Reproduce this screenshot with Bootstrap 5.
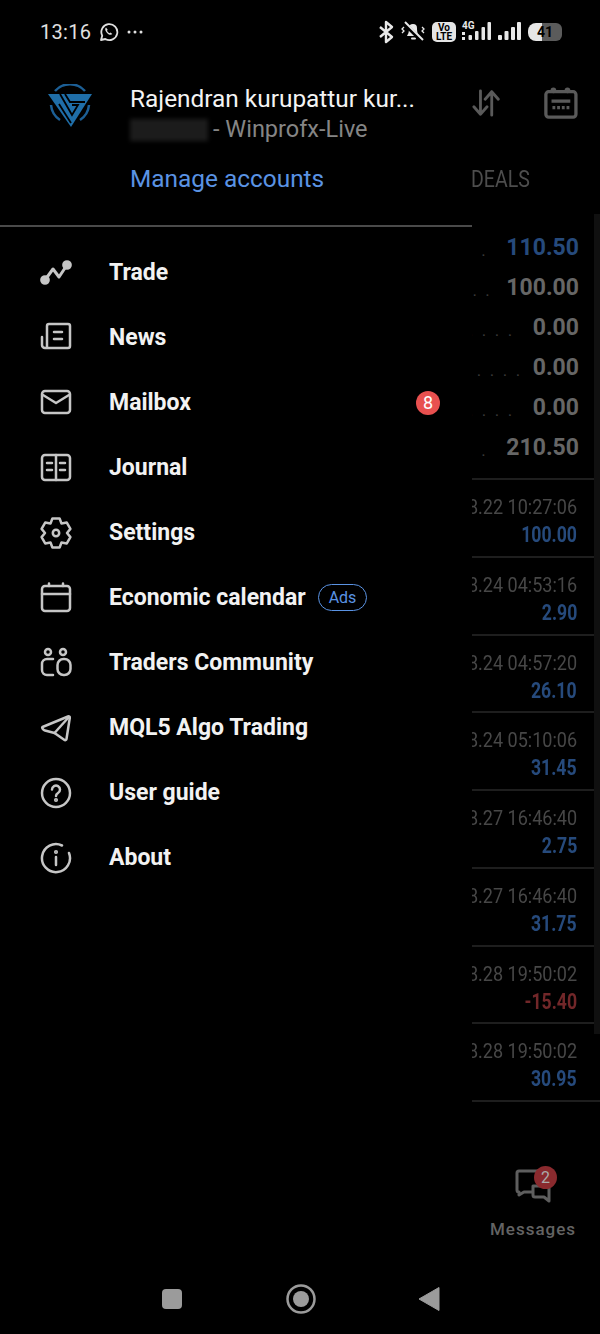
<!DOCTYPE html>
<html lang="en">
<head>
  <meta charset="UTF-8" />
  <title>Menu</title>
  <meta name="viewport" content="width=device-width, initial-scale=1" />
  <link href="https://cdn.jsdelivr.net/npm/bootstrap@5.3.0/dist/css/bootstrap.min.css" rel="stylesheet" />
  <style>
    html, body { height: 1334px; overflow: hidden; background: #000; }
    body { font-family: Roboto, sans-serif; color: #fff; }
    .screen { width: 600px; height: 1334px; }

    .status-bar { height: 63px; padding: 0 38px 0 40px; color: #e0e0e0; }
    .status-time { font-size: 20px; letter-spacing: .3px; }
    .status-icons { gap: 7px; }
    .volte { width: 24px; height: 20px; background: #e4e4e4; border-radius: 5px; color: #000; font-size: 10px; font-weight: 700; line-height: 9.5px; text-align: center; padding-top: 1px; }
    .net-wrap { width: 29px; height: 20px; margin-left: -1px; }
    .net-label { font-size: 10px; font-weight: 700; line-height: 9px; top: -1px; left: 0; color: #e8e8e8; }
    .battery { width: 34px; height: 18px; border-radius: 8px 6px 6px 8px; background: linear-gradient(90deg, #e6e6e6 42%, #5b5b5b 42%); color: #000; font-size: 14px; font-weight: 700; line-height: 18px; text-align: center; }

    .main-area { height: 1201px; }
    .drawer { width: 472px; flex: 0 0 472px; }
    .account { padding: 21px 0 0 0; height: 164px; border-bottom: 2px solid #4a4a4a; margin-bottom: 14px; }
    .logo-col { width: 130px; flex: 0 0 130px; padding: 0 0 0 47px; }
    .account-name { font-size: 24.4px; line-height: 30px; width: 300px; white-space: nowrap; color: #f4f4f4; }
    .account-server { font-size: 23.5px; line-height: 31px; color: #858585; }
    .blurred { width: 78px; height: 22px; background: #1c1c1c; filter: blur(2px); margin-right: 5px; }
    .manage-link { font-size: 24.4px; line-height: 30px; margin-top: 19px; color: #5a93e4; text-decoration: none; }

    .menu-row { height: 65px; padding-left: 40px; padding-right: 32px; color: #f2f2f2; text-decoration: none; font-size: 23px; font-weight: 700; }
    .menu-icon { width: 32px; height: 32px; margin-right: 37px; margin-bottom: 2px; flex: 0 0 32px; stroke: #c6c6c6; stroke-width: 2.5; fill: none; stroke-linecap: round; stroke-linejoin: round; }
    .count-dot { width: 24px; height: 24px; border-radius: 50%; background: #e8504f; color: #fff; font-size: 18px; line-height: 24px; text-align: center; font-weight: 400; margin-bottom: 2px; }
    .ads-pill { border: 1.5px solid #5a93e4; color: #5a93e4; border-radius: 15px; font-size: 16px; font-weight: 400; line-height: 25px; padding: 0 10px; margin-left: 12px; margin-bottom: 2px; }

    .back-panel { width: 128px; flex: 0 0 128px; overflow: hidden; color: #666; }
    .tool-row { height: 80px; padding-right: 22px; gap: 44px; }
    .tab-title { height: 71px; font-size: 23px; color: #4d4d4d; line-height: 74px; margin-bottom: 14px; margin-left: -1px; white-space: nowrap; transform: scaleX(.85); transform-origin: left; }
    .total-row { height: 40px; padding-right: 21px; white-space: nowrap; font-size: 23px; font-weight: 700; color: #666; }
    .total-row.is-blue { color: #264a7c; }
    .leader { font-size: 17px; font-weight: 400; letter-spacing: 8.5px; color: #3a3a3a; line-height: 1; margin-top: 4px; }
    .leader-wide { margin-right: 12px; }
    .total-list { height: 252px; border-bottom: 2px solid #1e1e1e; }
    .deal-row { height: 77.75px; flex: 0 0 77.75px; padding: 13px 23px 0 0; border-bottom: 2px solid #1e1e1e; white-space: nowrap; }
    .deal-time { font-size: 20.5px; line-height: 28px; color: #474747; transform: scaleX(.88); transform-origin: right; }
    .deal-value { font-size: 21.5px; line-height: 28px; font-weight: 700; color: #264a7c; transform: scaleX(.82); transform-origin: right; }
    .deal-value.is-loss { color: #722729; }
    .scroll-strip { top: 151px; right: 0; width: 6px; height: 820px; background: #101010; }

    .messages-tab { padding: 0 6px 25px 0; }
    .messages-icon { stroke: #5e5e5e; stroke-width: 3; fill: none; stroke-linejoin: round; }
    .messages-shift { margin-bottom: 16px; }
    .messages-badge { width: 23px; height: 23px; border-radius: 50%; background: #8a2a2e; color: #aaa; font-size: 16px; line-height: 23px; text-align: center; top: -3px; left: 19px; }
    .messages-label { font-size: 17px; letter-spacing: 1px; font-weight: 500; color: #636363; line-height: 20px; }

    .nav-bar { height: 70px; padding-left: 162px; }
    .nav-square { width: 20px; height: 20px; border-radius: 4px; background: #9b9b9b; margin-right: 104px; }
    .nav-home { width: 30px; height: 30px; margin-right: 102px; }
    .nav-back { width: 22px; height: 26px; }
  </style>
</head>
<body>
<div class="screen d-flex flex-column">

  <div class="status-bar d-flex align-items-center">
    <span class="status-time">13:16</span>
    <svg class="ms-2" width="20" height="20" viewBox="0 0 20 20" fill="none" stroke="#e0e0e0" stroke-width="1.8"><path d="M2 18l1.2-4.300A8 8 0 1 1 6.300 17z" stroke-linejoin="round"/><path d="M7 5.600c-1.400 1.200-.9 3.400 1 5.300s4 2.600 5.300 1.200l-1.800-1.600-1.100.7c-1-.5-1.900-1.400-2.400-2.400l.7-1.100z" fill="#e0e0e0" stroke="none"/></svg>
    <svg class="ms-2" width="16" height="4" viewBox="0 0 16 4" fill="#e0e0e0"><circle cx="2" cy="2" r="1.500"/><circle cx="8" cy="2" r="1.500"/><circle cx="14" cy="2" r="1.500"/></svg>
    <div class="status-icons ms-auto d-flex align-items-center">
      <svg width="16" height="24" viewBox="0 0 16 24" fill="none" stroke="#e8e8e8" stroke-width="2.400" stroke-linejoin="round"><path d="M2 7l12 10-6 5V2l6 5L2 17"/></svg>
      <svg width="24" height="24" viewBox="0 0 24 24" fill="none"><path d="M8 8a4 4 0 0 1 8 0c0 5 1 6 2 8H6c1-2 2-3 2-8z" fill="#e8e8e8"/><rect x="10" y="17.500" width="5" height="2" rx="1" fill="#e8e8e8"/><path d="M3 3l18 18" stroke="#000" stroke-width="4"/><path d="M4 2l18 18" stroke="#e8e8e8" stroke-width="2"/><path d="M3 7l-2 2 2 2 -2 2M21 7l2 2-2 2 2 2" stroke="#e8e8e8" stroke-width="1.300"/></svg>
      <div class="volte">Vo<br>LTE</div>
      <div class="net-wrap position-relative">
        <span class="net-label position-absolute">4G</span>
        <svg class="position-absolute top-0 start-0" width="29" height="20" viewBox="0 0 29 20" fill="#e8e8e8"><rect x="0" y="10" width="3" height="3"/><rect x="0" y="15" width="3" height="3"/><rect x="6.500" y="13" width="3.500" height="5" rx="1"/><rect x="13" y="9" width="3.500" height="9" rx="1"/><rect x="19.500" y="5" width="3.500" height="13" rx="1"/><rect x="25.500" y="0" width="3.500" height="18" rx="1"/></svg>
      </div>
      <svg width="23" height="20" viewBox="0 0 23 20" fill="#e8e8e8"><rect x="0" y="13" width="4" height="5" rx="1"/><rect x="6.500" y="9" width="4" height="9" rx="1"/><rect x="13" y="5" width="4" height="13" rx="1"/><rect x="19" y="0" width="4" height="18" rx="1"/></svg>
      <div class="battery">41</div>
    </div>
  </div>

  <div class="main-area d-flex position-relative">
    <div class="drawer">
      <div class="account d-flex">
        <div class="logo-col">
          <svg width="46" height="46" viewBox="0 0 46 46" fill="none">
            <path d="M8 7A20 20 0 0 1 38 7" stroke="#1c5f96" stroke-width="2.500"/>
            <path d="M4 21a20 20 0 0 0 9 15M42 21a20 20 0 0 1-9 15" stroke="#1c5f96" stroke-width="2.500"/>
            <path d="M1 10H45L24 43z" fill="#1f6ea8"/>
            <path d="M13 10L25 31L31 21H25M18 10L23 18H38M12 20L24 39" stroke="#000" stroke-width="1.800"/>
          </svg>
        </div>
        <div class="d-flex flex-column align-items-start">
          <div class="account-name">Rajendran kurupattur kur...</div>
          <div class="account-server d-flex align-items-center"><span class="blurred"></span>- Winprofx-Live</div>
          <a class="manage-link" href="#">Manage accounts</a>
        </div>
      </div>

      <nav class="d-flex flex-column">
        <a class="menu-row d-flex align-items-center" href="#">
          <svg class="menu-icon" viewBox="0 0 32 32"><path d="M5 23l8-11 6 8 8-12" stroke-width="3"/><circle cx="5" cy="23" r="3.600" fill="#c6c6c6"/><circle cx="27" cy="8" r="3.600" fill="#c6c6c6"/></svg>
          Trade
        </a>
        <a class="menu-row d-flex align-items-center" href="#">
          <svg class="menu-icon" viewBox="0 0 32 32"><path d="M7 26V4a2 2 0 0 1 2-2h19a2 2 0 0 1 2 2v20a2 2 0 0 1-2 2H5a3 3 0 0 1-3-3v-8"/><path d="M14 10h8M14 17h8"/></svg>
          News
        </a>
        <a class="menu-row d-flex align-items-center" href="#">
          <svg class="menu-icon" viewBox="0 0 32 32"><rect x="2" y="4" width="28" height="22" rx="3"/><path d="M3 8l13 8 13-8"/></svg>
          Mailbox
          <span class="count-dot ms-auto">8</span>
        </a>
        <a class="menu-row d-flex align-items-center" href="#">
          <svg class="menu-icon" viewBox="0 0 32 32"><rect x="2" y="3" width="28" height="25" rx="3"/><path d="M16 3v25M7 11h5M7 18h5M20 11h5M20 18h5"/></svg>
          Journal
        </a>
        <a class="menu-row d-flex align-items-center" href="#">
          <svg class="menu-icon" viewBox="0 0 32 32"><path d="M12.400 1.500H19.600L21.500 6.500L26.800 5.600L30.400 11.900L27 16L30.400 20.100L26.800 26.400L21.500 25.500L19.600 30.500H12.400L10.500 25.500L5.200 26.400L1.600 20.100L5 16L1.600 11.900L5.200 5.600L10.500 6.500z"/><circle cx="16" cy="16" r="3.200"/></svg>
          Settings
        </a>
        <a class="menu-row d-flex align-items-center" href="#">
          <svg class="menu-icon" viewBox="0 0 32 32"><rect x="2" y="4" width="28" height="25" rx="3"/><path d="M2 12h28M9 1.500V4M23 1.500V4"/></svg>
          Economic calendar
          <span class="ads-pill">Ads</span>
        </a>
        <a class="menu-row d-flex align-items-center" href="#">
          <svg class="menu-icon" viewBox="0 0 32 32"><circle cx="8" cy="5" r="3"/><circle cx="23" cy="5" r="3"/><path d="M13 12H7a5 5 0 0 0-5 5v6a5 5 0 0 0 5 5h6"/><rect x="17.500" y="12" width="13" height="16" rx="6"/></svg>
          Traders Community
        </a>
        <a class="menu-row d-flex align-items-center" href="#">
          <svg class="menu-icon" viewBox="0 0 32 32"><path d="M2.500 15L28 4.500c1-.4 2 .2 1.800 1.300L26.500 27c-.2 1.200-1.400 1.500-2.300.8L14.500 21 5 18.500c-1.500-.4-3.500-2.700-2.500-3.500z"/><path d="M14.500 21L28 6"/></svg>
          MQL5 Algo Trading
        </a>
        <a class="menu-row d-flex align-items-center" href="#">
          <svg class="menu-icon" viewBox="0 0 32 32"><circle cx="16" cy="16" r="14"/><path d="M12 12.500a4 4 0 1 1 6 3.500c-1.500.9-2 1.500-2 3"/><circle cx="16" cy="23" r=".8"/></svg>
          User guide
        </a>
        <a class="menu-row d-flex align-items-center" href="#">
          <svg class="menu-icon" viewBox="0 0 32 32"><path d="M22 3.500A14 14 0 1 0 29 11"/><path d="M16 15v8"/><circle cx="16" cy="10" r=".8"/></svg>
          About
        </a>
      </nav>
    </div>

    <div class="back-panel d-flex flex-column">
      <div class="tool-row d-flex align-items-center justify-content-end">
        <svg width="30" height="30" viewBox="0 0 30 30" fill="none" stroke="#5a5a5a" stroke-width="3" stroke-linecap="round" stroke-linejoin="round"><path d="M9 2v25M2 19l7 8 7-8"/><path d="M21 28V3M14 11l7-8 7 8"/></svg>
        <svg width="36" height="34" viewBox="0 0 36 34" fill="none" stroke="#5a5a5a" stroke-width="3.500"><rect x="2" y="5" width="32" height="27" rx="3"/><path d="M8 15h20" stroke-width="3.500"/><path d="M9 22h18" stroke-width="3.500" stroke-dasharray="3 2"/><circle cx="10" cy="3.500" r="3" fill="#5a5a5a" stroke="none"/><circle cx="25" cy="3.500" r="3" fill="#5a5a5a" stroke="none"/></svg>
      </div>
      <div class="tab-title">DEALS</div>
      <div class="total-list">
        <div class="total-row is-blue d-flex justify-content-end align-items-center"><span class="leader leader-wide">.</span>110.50</div>
        <div class="total-row d-flex justify-content-end align-items-center"><span class="leader me-2">..</span>100.00</div>
        <div class="total-row d-flex justify-content-end align-items-center"><span class="leader leader-wide">....</span>0.00</div>
        <div class="total-row d-flex justify-content-end align-items-center"><span class="leader me-1">....</span>0.00</div>
        <div class="total-row d-flex justify-content-end align-items-center"><span class="leader leader-wide">....</span>0.00</div>
        <div class="total-row d-flex justify-content-end align-items-center"><span class="leader leader-wide">..</span>210.50</div>
      </div>
      <div class="deal-row d-flex flex-column align-items-end"><div class="deal-time">2023.08.22 10:27:06</div><div class="deal-value">100.00</div></div>
      <div class="deal-row d-flex flex-column align-items-end"><div class="deal-time">2023.08.24 04:53:16</div><div class="deal-value">2.90</div></div>
      <div class="deal-row d-flex flex-column align-items-end"><div class="deal-time">2023.08.24 04:57:20</div><div class="deal-value">26.10</div></div>
      <div class="deal-row d-flex flex-column align-items-end"><div class="deal-time">2023.08.24 05:10:06</div><div class="deal-value">31.45</div></div>
      <div class="deal-row d-flex flex-column align-items-end"><div class="deal-time">2023.08.27 16:46:40</div><div class="deal-value">2.75</div></div>
      <div class="deal-row d-flex flex-column align-items-end"><div class="deal-time">2023.08.27 16:46:40</div><div class="deal-value">31.75</div></div>
      <div class="deal-row d-flex flex-column align-items-end"><div class="deal-time">2023.08.28 19:50:02</div><div class="deal-value is-loss">-15.40</div></div>
      <div class="deal-row d-flex flex-column align-items-end"><div class="deal-time">2023.08.28 19:50:02</div><div class="deal-value">30.95</div></div>
      <div class="messages-tab mt-auto d-flex flex-column align-items-center">
        <div class="messages-shift position-relative">
          <svg class="messages-icon d-block" width="36" height="34" viewBox="0 0 36 34"><path d="M4 2h20a2 2 0 0 1 2 2v17a2 2 0 0 1-2 2H9l-5 3v-3a2 2 0 0 1-2-2V4a2 2 0 0 1 2-2z"/><path d="M18 17h14a2 2 0 0 1 2 2v13l-5-4H20a2 2 0 0 1-2-2z" fill="#000"/></svg>
          <span class="messages-badge position-absolute">2</span>
        </div>
        <div class="messages-label">Messages</div>
      </div>
      <div class="scroll-strip position-absolute"></div>
    </div>
  </div>

  <div class="nav-bar d-flex align-items-center">
    <span class="nav-square"></span>
    <svg class="nav-home" viewBox="0 0 30 30"><circle cx="15" cy="15" r="13.500" fill="none" stroke="#9b9b9b" stroke-width="2.500"/><circle cx="15" cy="15" r="8" fill="#9b9b9b"/></svg>
    <svg class="nav-back" viewBox="0 0 22 26"><path d="M21 1.500v23L1 13z" fill="#9b9b9b" stroke="#9b9b9b" stroke-linejoin="round"/></svg>
  </div>
</div>
<script src="https://cdn.jsdelivr.net/npm/bootstrap@5.3.0/dist/js/bootstrap.bundle.min.js"></script>
</body>
</html>
